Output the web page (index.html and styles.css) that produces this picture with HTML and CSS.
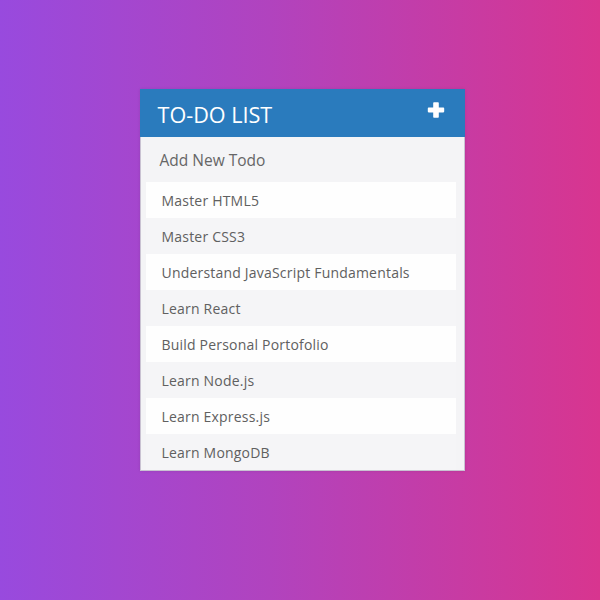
FILE: index.html
```html
<!DOCTYPE html>
<html>
<head>
<meta charset="utf-8">
<link rel="stylesheet" href="styles.css">
</head>
<body>
<div class="stage">
  <div class="card">
    <div class="header">
      <h1 class="title">To-Do List</h1>
      <svg class="plus" viewBox="0 0 18 18" width="18" height="18">
        <path d="M7 1.2h4a0.8 0.8 0 0 1 .8.8v4.6h4.6a0.8 0.8 0 0 1 .8.8v3.2a0.8 0.8 0 0 1-.8.8h-4.6v4.6a0.8 0.8 0 0 1-.8.8H7a0.8 0.8 0 0 1-.8-.8v-4.6H1.6a0.8 0.8 0 0 1-.8-.8V7.4a0.8 0.8 0 0 1 .8-.8h4.6V2a0.8 0.8 0 0 1 .8-.8z" fill="#fff"/>
      </svg>
    </div>
    <div class="add">Add New Todo</div>
    <ul class="list">
      <li class="item">Master HTML5</li>
      <li class="item">Master CSS3</li>
      <li class="item">Understand JavaScript Fundamentals</li>
      <li class="item">Learn React</li>
      <li class="item">Build Personal Portofolio</li>
      <li class="item">Learn Node.js</li>
      <li class="item">Learn Express.js</li>
      <li class="item">Learn MongoDB</li>
    </ul>
  </div>
</div>
</body>
</html>
```

FILE: styles.css
```css
html, body {
  margin: 0;
  padding: 0;
  height: 100%;
}
body {
  background: linear-gradient(to right, #984ade 0%, #b143be 45%, #d8358f 100%);
  font-family: "Open Sans", "Noto Sans", sans-serif;
}
.stage {
  display: flex;
  justify-content: center;
  padding-top: 89px;
  padding-left: 4px;
}
.card {
  width: 323px;
  background: #f4f4f6;
  border: 1px solid #c9c2d2;
  border-top: none;
  box-shadow: 0 0 3px rgba(0,0,0,0.1);
}
.header {
  height: 48px;
  background: #2a7bbd;
  display: flex;
  align-items: center;
  justify-content: space-between;
  padding: 0 20px 0 18px;
  margin: 0 -1px;
}
.title {
  margin: 0;
  font-size: 21.6px;
  font-weight: 400;
  color: #fff;
  text-transform: uppercase;
  letter-spacing: 0;
  line-height: 1;
  padding-top: 3px;
}
.plus {
  display: block;
  margin-top: -6px;
}
.add {
  height: 45px;
  display: flex;
  align-items: center;
  padding-left: 19px;
  font-size: 15.5px;
  color: #666;
  background: #f4f4f6;
}
.list {
  list-style: none;
  margin: 0;
  padding: 0 8px 0 5px;
}
.item {
  height: 36px;
  display: flex;
  align-items: center;
  padding-left: 16px;
  font-size: 14px;
  letter-spacing: 0.2px;
  color: #606060;
  background: #fefefe;
}
.item:nth-child(even) {
  background: #f5f5f7;
}
```
